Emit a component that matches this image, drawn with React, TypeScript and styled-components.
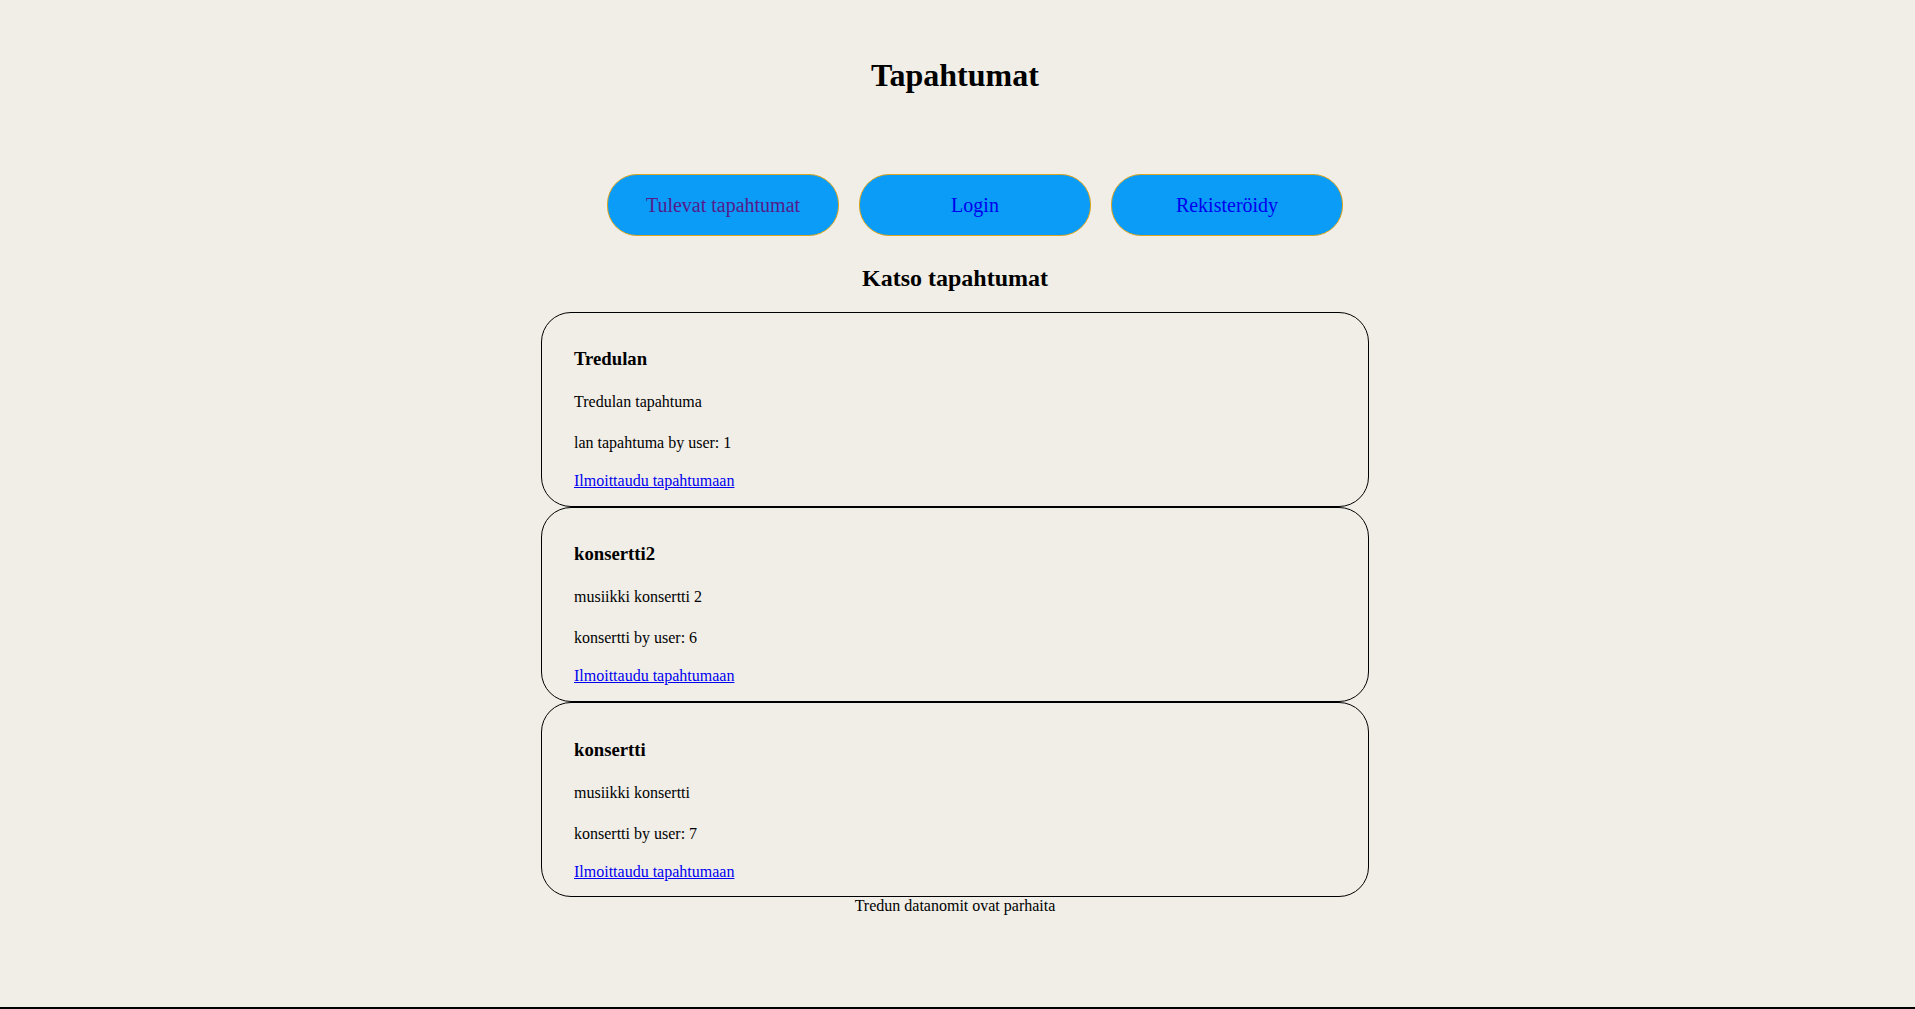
import React from "react";
import styled, { createGlobalStyle } from "styled-components";

const GlobalStyle = createGlobalStyle`
  body {
    margin: 0;
    background-color: #f1eee8;
    font-family: "Liberation Serif", "Times New Roman", serif;
    color: black;
  }
`;

const Page = styled.div`
  min-height: 100vh;
  display: flex;
  flex-direction: column;
`;

const Main = styled.main`
  flex: 1;
  display: flex;
  flex-direction: column;
  align-items: center;
  padding-right: 5px;
`;

const Title = styled.h1`
  font-size: 32px;
  font-weight: bold;
  line-height: normal;
  margin: 57px 0 0;
`;

const Nav = styled.nav`
  display: flex;
  gap: 20px;
  padding-left: 40px;
  margin-top: 80px;
`;

const NavButton = styled.a<{ $visited?: boolean }>`
  width: 232px;
  height: 62px;
  box-sizing: border-box;
  display: flex;
  align-items: center;
  justify-content: center;
  background-color: #0a9cf6;
  border: 1px solid #daa520;
  border-radius: 30px;
  font-size: 20px;
  text-decoration: none;
  color: ${(p) => (p.$visited ? "#551a8b" : "#0000ee")};
  cursor: pointer;
`;

const SubTitle = styled.h2`
  font-size: 24px;
  font-weight: bold;
  line-height: normal;
  margin: 29px 0 0;
`;

const EventList = styled.div`
  margin-top: 19.5px;
  display: flex;
  flex-direction: column;
`;

const EventCard = styled.div`
  width: 828px;
  box-sizing: border-box;
  border: 1px solid black;
  border-radius: 30px;
  padding: 17px 32px 12.5px;
  display: flex;
  flex-direction: column;
  align-items: flex-start;
`;

const EventName = styled.h3`
  font-size: 18.72px;
  font-weight: bold;
  line-height: normal;
  margin: 18.72px 0 0;
`;

const EventText = styled.p<{ $gap: number }>`
  font-size: 16px;
  line-height: 24px;
  margin: ${(p) => p.$gap}px 0 0;
`;

const JoinLink = styled.a`
  font-size: 16px;
  line-height: 24px;
  margin-top: 14px;
  color: #0000ee;
  text-decoration: underline;
  cursor: pointer;
`;

const Footer = styled.footer`
  font-size: 16px;
  line-height: normal;
`;

const BottomBar = styled.div`
  height: 2px;
  background-color: black;
`;

const events = [
  { name: "Tredulan", description: "Tredulan tapahtuma", meta: "lan tapahtuma by user: 1" },
  { name: "konsertti2", description: "musiikki konsertti 2", meta: "konsertti by user: 6" },
  { name: "konsertti", description: "musiikki konsertti", meta: "konsertti by user: 7" },
];

export default function App() {
  return (
    <Page>
      <GlobalStyle />
      <Main>
        <Title>Tapahtumat</Title>
        <Nav>
          <NavButton $visited>Tulevat tapahtumat</NavButton>
          <NavButton>Login</NavButton>
          <NavButton>Rekisteröidy</NavButton>
        </Nav>
        <SubTitle>Katso tapahtumat</SubTitle>
        <EventList>
          {events.map((ev) => (
            <EventCard key={ev.name}>
              <EventName>{ev.name}</EventName>
              <EventText $gap={20}>{ev.description}</EventText>
              <EventText $gap={17}>{ev.meta}</EventText>
              <JoinLink>Ilmoittaudu tapahtumaan</JoinLink>
            </EventCard>
          ))}
        </EventList>
        <Footer>Tredun datanomit ovat parhaita</Footer>
      </Main>
      <BottomBar />
    </Page>
  );
}
